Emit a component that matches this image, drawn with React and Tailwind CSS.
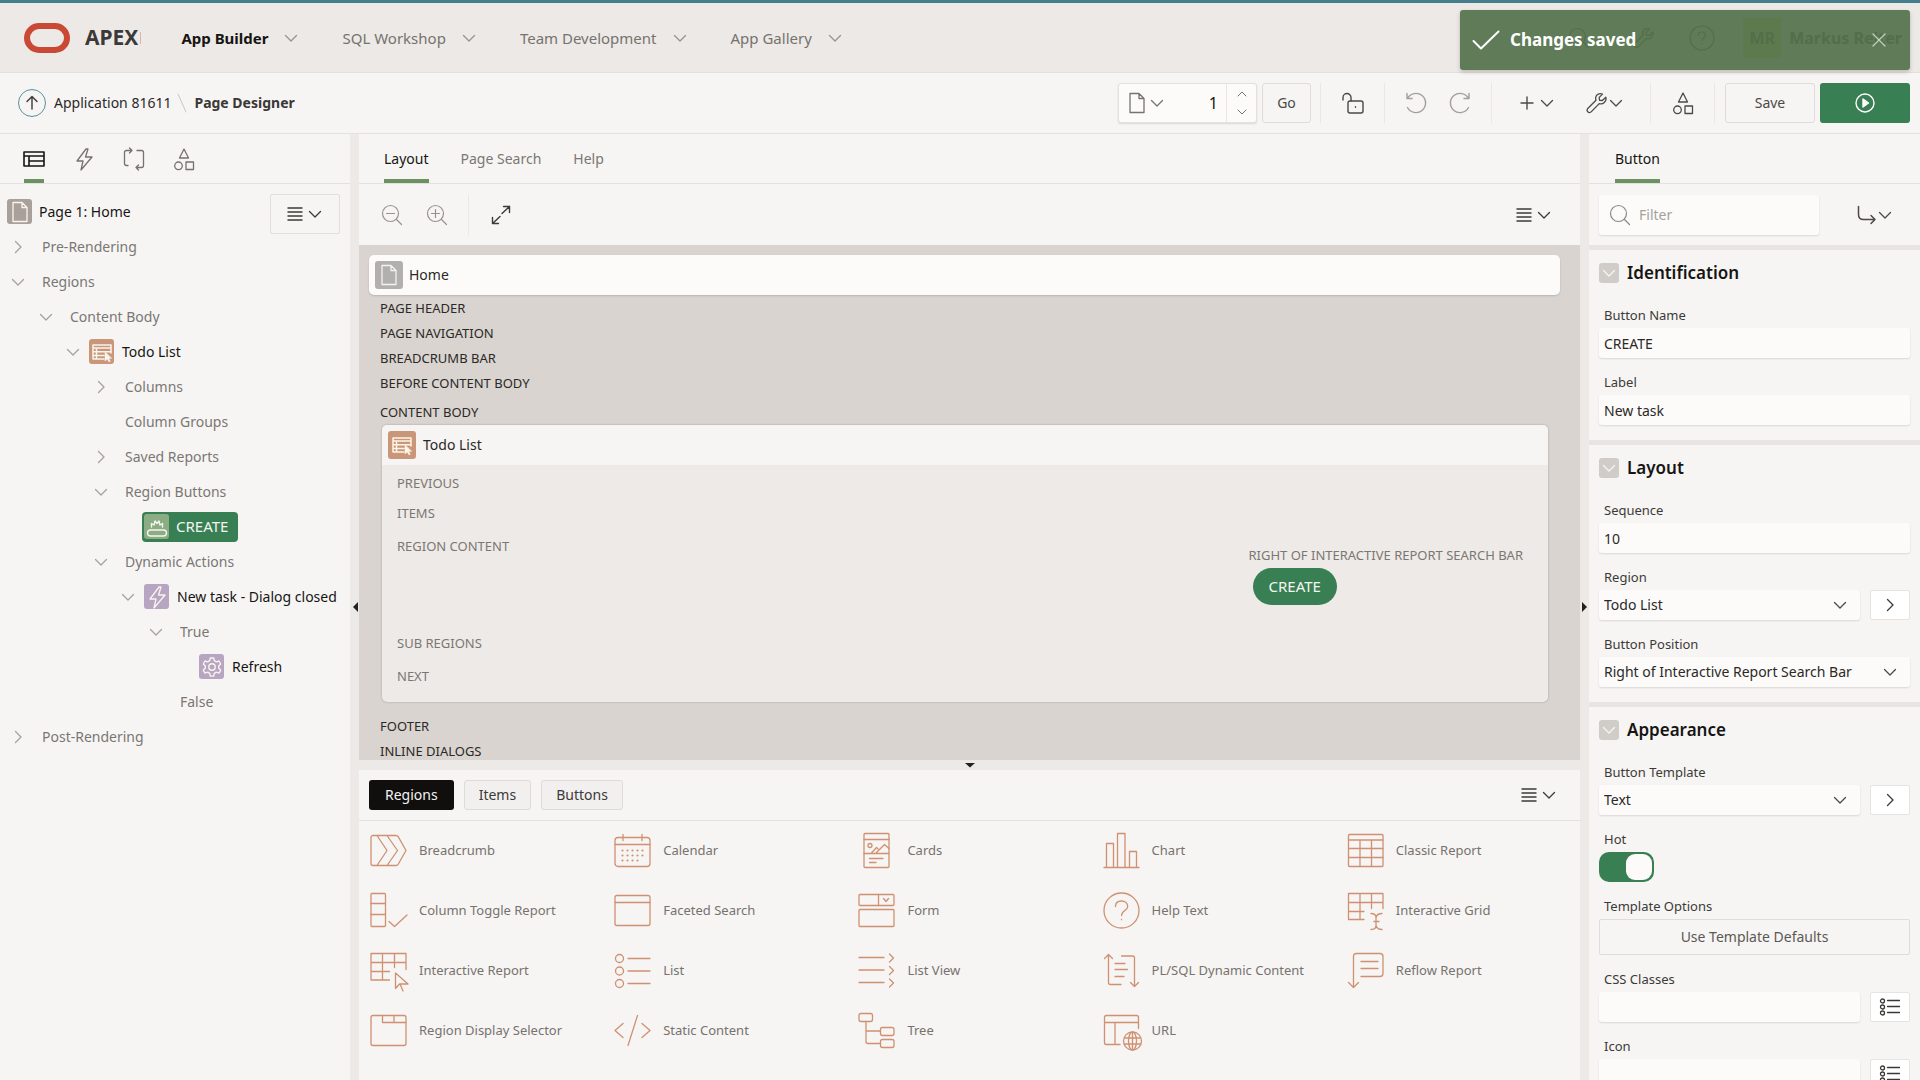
import React from "react";

/* ---------- icons ---------- */

function Svg({ size = 24, sw = 1, className = "", children, w, h, vb }) {
  return (
    <svg
      width={w || size}
      height={h || size}
      viewBox={vb || `0 0 ${w || size} ${h || size}`}
      fill="none"
      stroke="currentColor"
      strokeWidth={sw}
      strokeLinecap="round"
      strokeLinejoin="round"
      className={"shrink-0 " + className}
      aria-hidden="true"
    >
      {children}
    </svg>
  );
}

const ChevronDown = ({ className = "" }) => (
  <Svg size={16} sw={1.3} className={className}>
    <path d="M2.500 5.500 8 11l5.500-5.500" />
  </Svg>
);
const ChevronRight = ({ className = "" }) => (
  <Svg size={16} sw={1.3} className={className}>
    <path d="M5.500 2.500 11 8l-5.500 5.500" />
  </Svg>
);
const MenuLines = () => (
  <Svg size={16} sw={1.3}>
    <path d="M.5 2h15M.5 6h15M.5 10h15M.5 14h15" strokeLinecap="butt" />
  </Svg>
);
const FileIcon = ({ className = "" }) => (
  <Svg w={16} h={22} sw={1.3} className={className}>
    <path d="M1 1.500h9l5 5V20.500H1zM10 1.500v5h5" />
  </Svg>
);
const Bolt = ({ className = "" }) => (
  <Svg size={24} sw={1.3} className={className}>
    <path d="M14 2 5 14h6l-2 9 11-13h-6.500l2.500-8z" />
  </Svg>
);
const Shapes = () => (
  <Svg size={24} sw={1.3}>
    <path d="M12 2l4.500 9h-9zM14 15h7.500v7.500H14z" />
    <circle cx="6.500" cy="18.800" r="3.800" />
  </Svg>
);
const Wrench = () => (
  <Svg size={22} sw={1.300}>
    <path d="M19.800 5.200l-3.400 3.300-2.900-.200-.300-2.900 3.300-3.300C13.600.9 10.300 2.200 9.700 5.300c-.200 1 0 2 .300 3L2 16.300c-1.100 1.200-1.100 2.500-.2 3.500 1 1 2.500 1 3.600-.200l7.800-8c3.600 1.300 7.800-1.900 6.600-6.400z" />
  </Svg>
);
const SearchIcon = ({ sign = "", className = "" }) => (
  <Svg size={22} sw={1.200} className={className}>
    <circle cx="9.500" cy="9.500" r="8" />
    <path d="M15.500 15.500 20.500 20.500" />
    {sign !== "" && <path d="M5.500 9.500h8" />}
    {sign === "+" && <path d="M9.500 5.500v8" />}
  </Svg>
);
const ListIcon = () => (
  <Svg w={22} h={20} sw={1.300}>
    <circle cx="3.500" cy="4" r="2" />
    <circle cx="3.500" cy="10" r="2" />
    <circle cx="3.500" cy="16" r="2" />
    <path d="M8.500 3.500h12M8.500 9.500h12M8.500 15.500h12" />
  </Svg>
);

const GALLERY = [
  ["Breadcrumb", <path d="M6 6.500h23q1.500 0 2.200 1.200l7.800 13.800-7.800 13.800q-.7 1.200-2.200 1.200H6a2 2 0 0 1-2-2V8.500a2 2 0 0 1 2-2zM10 6.500l10 15-10 15M20 6.500l10.500 15-10.500 15" />],
  ["Calendar", <><rect x="4" y="8.500" width="35" height="29" rx="3" /><path d="M4 15.500h35M12 5.500v6M31 5.500v6" /><path strokeWidth="2.200" d="M11.500 21.500h0M16.500 21.500h0M21.500 21.500h0M26.500 21.500h0M31.500 21.500h0M11.500 26.500h0M16.500 26.500h0M21.500 26.500h0M26.500 26.500h0M31.500 26.500h0M11.500 31.500h0M16.500 31.500h0M21.500 31.500h0M26.500 31.500h0" /></>],
  ["Cards", <><rect x="9" y="4.500" width="25" height="34" rx="1" /><circle cx="15" cy="16.500" r="2" /><path d="M9 10.500h25M9 24.500h25M16 24.500l5.500-6 1.500 1.500M20.500 24.500l9-9 4.500 4M14.500 29.500H28M14.500 33.500H21" /></>],
  ["Chart", <path d="M4 38.500h35M6.500 38.500v-24h7v24M17.500 38.500v-34h7.500v34M29.500 38.500v-16h7v16" />],
  ["Classic Report", <><rect x="4.500" y="5.500" width="34.500" height="32" rx="1" /><path d="M4.500 11h34.500M4.500 19.500h34.500M4.500 28.500h34.500M16 11v26.500M27.500 11v26.500" /></>],
  ["Column Toggle Report", <><rect x="4" y="4.500" width="14.500" height="33" rx="1" /><path d="M4 14.500h14.500M4 25.500h14.500M22 32.500l5.500 5L40 26" /></>],
  ["Faceted Search", <><rect x="4" y="6.500" width="35" height="30" rx="2" /><path d="M4 13.500h35" /></>],
  ["Form", <><rect x="4" y="5.500" width="35" height="11" rx="1" /><rect x="4" y="20.500" width="35" height="17" rx="1" /><path d="M23.500 5.500v11M28.500 9.500l2.500 3 2.500-3" /></>],
  ["Help Text", <><circle cx="21.500" cy="21.500" r="17.500" /><path d="M15.500 17.500c0-3.500 2.500-5.500 6-5.500s6.200 2.200 6.200 5.500c0 4-6.200 4-6.200 9M21.500 30.300v.4" /></>],
  ["Interactive Grid", <path d="M39 19.500v-15H4.500v26H20M4.500 13.500H39M4.500 22.500H20M16 4.500v26M27.500 4.500v15M27 24.500q5 0 5 4v8q0 4-5 4M38 24.500q-5 0-6 4M38 40.500q-5 0-6-4M30 32.500h5" />],
  ["Interactive Report", <path d="M39 20.500v-16H4v26.500h18.500M4 13.500h35M4 22.500h18.500M15.500 4.500V31M27.500 4.500v14M28.500 24v15.500l4-4.500h8.500zM33 35l3 7" />],
  ["List", <><circle cx="8.500" cy="9.500" r="4" /><circle cx="8.500" cy="22" r="4" /><circle cx="8.500" cy="34.500" r="4" /><path d="M17 9.500h22M17 22h22M17 34.500h22" /></>],
  ["List View", <path d="M4 8.500h25M4 21h25M4 33.500h25M34.500 5l4 4-4 4M34.500 17.500l4 4-4 4M34.500 30l4 4-4 4" />],
  ["PL/SQL Dynamic Content", <path d="M4.500 9.500l4-4 4 4M8.500 5.500v28q0 2 2 2H21M21.500 7h11q2 0 2 2v28.500M30.500 33.500l4 4 4-4M15 14.500h10M15 20.500h12.500M15 27.500h9" />],
  ["Reflow Report", <path d="M4.500 33.500l5 5 5-5M9.500 38.500v-31q0-3 3-3H36q3 0 3 3v17q0 3-3 3H17M17 12.500h17M17 19.500h17" />],
  ["Region Display Selector", <><rect x="4" y="6.500" width="35" height="30" rx="2" /><path d="M15.500 6.500v7H39M27 6.500v7" /></>],
  ["Static Content", <path d="M12 14.500l-8 7 8 7M31 14.500l8 7-8 7M26.500 6.500l-9.500 30" />],
  ["Tree", <><rect x="4" y="4.500" width="13.500" height="8" rx="2" /><rect x="25.500" y="18.500" width="13.500" height="8" rx="2" /><rect x="25.500" y="30.500" width="13.500" height="8" rx="2" /><path d="M11 12.500v20q0 2 2 2h12.500M11 22h14.500" /></>],
  ["URL", <><path d="M38.500 19.500v-11q0-2-2-2h-30q-2 0-2 2v25q0 2 2 2H20M4.500 13.500h34M15 13.500v22" /><circle cx="32.500" cy="32" r="9" /><ellipse cx="32.500" cy="32" rx="4" ry="9" /><path d="M32.500 23v18M24.500 29h16M24.500 35h16" /></>],
];

/* ---------- tiles ---------- */

const RegionGlyph = () => (
  <Svg size={22} sw={1.500}>
    <path d="M20 12V4H2v14h11M2 7h18M2 10.800h18M2 14.500h11M5.500 7v11" />
    <path d="M14 11v9l2.200-2 1.800 3 1.300-.8-1.600-2.900h2.800z" fill="currentColor" strokeWidth=".5" />
  </Svg>
);
const ButtonGlyph = () => (
  <Svg size={22} sw={1.400}>
    <rect x="1.500" y="14" width="19" height="6" rx="3" />
    <path d="M5.500 11V7.500L8 9l1-4 2 2.500L13 5l1 4 2.500-1.500V11" />
  </Svg>
);
const GearGlyph = () => (
  <Svg size={22} sw={1.400}>
    <circle cx="11" cy="11" r="3.200" />
    <path d="M9.300 2h3.400l.6 2.700 2 1.200 2.700-.9 1.700 3-2 1.900v2.300l2 1.900-1.700 3-2.700-.9-2 1.200-.6 2.700H9.300l-.6-2.700-2-1.200-2.700.9-1.700-3 2-1.900V9.900l-2-1.900 1.700-3 2.700.9 2-1.200z" />
  </Svg>
);

function Tile({ kind }) {
  const bg = {
    page: "bg-[#a8a099]",
    region: "bg-[#ca9679]",
    button: "bg-[#8aad84]",
    action: "bg-[#b8a5c1]",
    refresh: "bg-[#b8a5c1]",
  }[kind];
  return (
    <span className={"flex size-[25px] shrink-0 items-center justify-center rounded-[3px] text-[#f8f5ee] " + bg}>
      {kind === "page" && <FileIcon />}
      {kind === "region" && <RegionGlyph />}
      {kind === "button" && <ButtonGlyph />}
      {kind === "action" && <Bolt />}
      {kind === "refresh" && <GearGlyph />}
    </span>
  );
}

/* ---------- header ---------- */

function Header() {
  const nav = ["App Builder", "SQL Workshop", "Team Development", "App Gallery"];
  return (
    <header className="relative flex h-[73px] shrink-0 items-center border-t-[3px] border-b border-t-[#447e8c] border-b-[#e3e0dc] bg-[#ede9e6] pt-px pr-[18px] pl-6">
      <Svg w={46} h={30}>
        <rect x="3" y="3" width="40" height="24" rx="12" strokeWidth="6" className="text-[#c94935]" />
      </Svg>
      <span className="ml-[15px] text-[21px] font-bold text-[#3c3a38]">APEX</span>
      <span className="ml-[2px] h-3 w-px bg-[#e0b5a8]" />
      <nav className="ml-[40px] flex gap-[43px]">
        {nav.map((n, i) => (
          <button key={n} className="flex items-center gap-[15px] text-[15px]">
            <span className={i === 0 ? "font-bold text-[#161513]" : "text-[#76726e]"}>{n}</span>
            <ChevronDown className="text-[#98938e]" />
          </button>
        ))}
      </nav>
      <div className="ml-auto flex items-center text-[#3c3a38]">
        <button aria-label="Search" className="mr-[43px]"><SearchIcon /></button>
        <button aria-label="Administration" className="mr-[34px]"><Wrench /></button>
        <button aria-label="Help" className="mr-7">
          <Svg size={26} sw={1.200}>
            <circle cx="13" cy="13" r="12" />
            <path d="M9.500 10.500c0-2.500 1.500-3.500 3.500-3.500s3.500 1.200 3.500 3.300c0 2.500-3.500 2.700-3.500 5.200M13 18.500v.3" />
          </Svg>
        </button>
        <button className="flex items-center gap-2 text-base font-bold">
          <span className="flex h-10 w-[38px] items-center justify-center bg-[#bfe06a]">MR</span>
          Markus Reiter
        </button>
      </div>
      <div
        role="status"
        className="absolute top-[7px] right-[10px] z-10 flex h-[60px] w-[450px] items-center rounded-[3px] bg-[#54724b]/93 pr-6 pl-3 text-white shadow-[0_2px_4px_rgba(0,0,0,0.2)]"
      >
        <Svg w={28} h={20} sw={2}>
          <path d="M1.500 11 9 18.500 26.500 1.500" />
        </Svg>
        <span className="ml-[10px] text-[17px] font-bold">Changes saved</span>
        <button aria-label="Close" className="ml-auto text-[#c5d0bf]">
          <Svg size={14} sw={1.300}><path d="M1 1l12 12M13 1 1 13" /></Svg>
        </button>
      </div>
    </header>
  );
}

const Divider = () => <span className="h-10 w-px shrink-0 bg-[#eae7e4]" />;

function Toolbar() {
  return (
    <div className="flex h-[61px] shrink-0 items-center border-b border-[#e3e1de] pr-[10px] pl-[18px] text-[#4c4946]">
      <a href="#app" aria-label="Up" className="flex size-7 items-center justify-center rounded-full border border-[#56909c] text-[#3c3a38]">
        <Svg size={16} sw={1.400}><path d="M8 14V2M3 6.500 8 1.500l5 5" /></Svg>
      </a>
      <a href="#app" className="ml-2 text-sm text-[#2b2927]">Application 81611</a>
      <Svg w={10} h={20} className="mr-[7px] ml-[6px] text-[#c9c5c1]"><path d="M1 1l8 18" /></Svg>
      <span className="text-sm font-bold text-[#3a3836]">Page Designer</span>

      <div className="ml-auto flex items-center">
        <div className="flex h-10 w-[139px] items-center rounded-[3px] border border-[#e3e1de] bg-[#fcfbf9] shadow-[0_1px_2px_rgba(0,0,0,0.12)]">
          <button aria-label="Page finder" className="ml-[10px] flex items-center gap-1 text-[#76726e]">
            <FileIcon /><ChevronDown />
          </button>
          <input aria-label="Page number" defaultValue="1" className="w-0 min-w-0 flex-1 bg-transparent pr-2 text-right text-base text-[#161513] outline-none" />
          <div className="flex h-full w-[30px] flex-col items-center justify-center gap-[12px] border-l border-[#e8e5e2] text-[#76726e]">
            <button aria-label="Next page"><Svg w={10} h={6}><path d="M1 5l4-4 4 4" /></Svg></button>
            <button aria-label="Previous page"><Svg w={10} h={6}><path d="M1 1l4 4 4-4" /></Svg></button>
          </div>
        </div>
        <button className="ml-[5px] h-10 w-[49px] rounded-[3px] border border-[#dfdcd9] text-sm">Go</button>
        <span className="ml-[9px]" /><Divider />
        <button aria-label="Page unlocked" className="flex w-[63px] justify-center">
          <Svg size={22} sw={1.400}>
            <rect x="6" y="9" width="15" height="12" rx="2" />
            <path d="M9 9V5.500a4 4 0 0 0-8 0V8M13.500 14.800v.4" />
          </Svg>
        </button>
        <Divider />
        <button aria-label="Undo" className="ml-[20px] text-[#a29e9a]">
          <Svg size={22} sw={1.400}><path d="M2 1.500v5h5M2.500 6.500A9.600 9.600 0 1 1 2.500 15.500" /></Svg>
        </button>
        <button aria-label="Redo" className="mr-[20px] ml-[22px] text-[#a29e9a]">
          <Svg size={22} sw={1.400}><path d="M20 1.500v5h-5M19.500 6.500A9.600 9.600 0 1 0 19.500 15.500" /></Svg>
        </button>
        <Divider />
        <button aria-label="Create" className="ml-[28px] flex items-center gap-[5px]">
          <Svg size={14} sw={1.400}><path d="M7 1v12M1 7h12" /></Svg><ChevronDown />
        </button>
        <button aria-label="Utilities" className="mr-[26px] ml-[31px] flex items-center">
          <Wrench /><ChevronDown />
        </button>
        <Divider />
        <button aria-label="Shared Components" className="flex w-[63px] justify-center"><Shapes /></button>
        <Divider />
        <button className="ml-[10px] h-10 w-[90px] rounded-[3px] border border-[#dfdcd9] text-sm">Save</button>
        <button aria-label="Save and Run Page" className="ml-[5px] flex h-10 w-[90px] items-center justify-center rounded-[3px] bg-[#397f54] text-white">
          <Svg size={20} sw={1.400}>
            <circle cx="10" cy="10" r="9" />
            <path d="M8 6l5.500 4L8 14z" fill="currentColor" />
          </Svg>
        </button>
      </div>
    </div>
  );
}

/* ---------- left tree ---------- */

const PAD = ["pl-[10px]", "pl-[38px]", "pl-[65px]", "pl-[93px]", "pl-[120px]", "pl-[148px]", "pl-[175px]"];

const TREE = [
  [0, "right", null, "Pre-Rendering"],
  [0, "down", null, "Regions"],
  [1, "down", null, "Content Body"],
  [2, "down", "region", "Todo List"],
  [3, "right", null, "Columns"],
  [3, null, null, "Column Groups"],
  [3, "right", null, "Saved Reports"],
  [3, "down", null, "Region Buttons"],
  [4, null, "button", "CREATE"],
  [3, "down", null, "Dynamic Actions"],
  [4, "down", "action", "New task - Dialog closed"],
  [5, "down", null, "True"],
  [6, null, "refresh", "Refresh"],
  [5, null, null, "False"],
  [0, "right", null, "Post-Rendering"],
];

function TreeRow({ row }) {
  const [level, arrow, tile, label] = row;
  const selected = tile === "button";
  return (
    <li className={"flex h-[35px] items-center whitespace-nowrap text-sm " + PAD[level]}>
      <span className="flex w-4 shrink-0 text-[#a5a19d]">
        {arrow === "down" && <ChevronDown />}
        {arrow === "right" && <ChevronRight />}
      </span>
      {selected ? (
        <span className="ml-[6px] flex h-[30px] items-center gap-[7px] rounded-[4px] bg-[#397f54] pr-[10px] pl-[2px] text-[15px] text-[#f3f6f2]">
          <Tile kind={tile} />{label}
        </span>
      ) : tile ? (
        <span className="ml-2 flex items-center gap-2 text-[#161513]"><Tile kind={tile} />{label}</span>
      ) : (
        <span className="ml-4 text-[#7b7773]">{label}</span>
      )}
    </li>
  );
}

function LeftPanel() {
  return (
    <aside className="flex min-w-0 flex-col overflow-hidden">
      <div className="flex h-[50px] shrink-0 border-b border-[#e3e1de] pl-[22px] text-[#76726e]">
        <button aria-label="Rendering" className="relative mr-[26px] flex h-full w-6 items-center justify-center text-[#161513] after:absolute after:inset-x-[2px] after:bottom-0 after:h-1 after:bg-[#6b9362]">
          <Svg w={22} h={18} sw={1.600}><path d="M1 2h20v14H1zM1 6h20M6 6v10M6 11h15" /></Svg>
        </button>
        <button aria-label="Dynamic Actions" className="mr-[26px]"><Bolt /></button>
        <button aria-label="Processing" className="mr-[26px]">
          <Svg size={24} sw={1.300}>
            <path d="M10 3.500H4.500q-2 0-2 2v11q0 2 2 2H6M7.500 1l2.500 2.500L7.500 6M14 20.500h5.500q2 0 2-2v-13q0-2-2-2H15M16.500 18 14 20.500l2.500 2.500" />
          </Svg>
        </button>
        <button aria-label="Page Shared Components"><Shapes /></button>
      </div>
      <div className="relative pt-[10px]">
        <div className="flex h-[35px] items-center gap-[7px] pl-[7px] text-sm text-[#161513]">
          <Tile kind="page" />Page 1: Home
        </div>
        <button aria-label="Menu" className="absolute top-[10px] right-[10px] flex h-10 w-[70px] items-center justify-center gap-1 rounded-[2px] border border-[#e1dedb] text-[#3c3a38]">
          <MenuLines /><ChevronDown />
        </button>
        <ul>
          {TREE.map((r) => <TreeRow key={r[3]} row={r} />)}
        </ul>
      </div>
    </aside>
  );
}

/* ---------- centre ---------- */

function Tab({ active, children }) {
  return (
    <button
      className={
        "relative h-full pt-px text-sm " +
        (active
          ? "text-[#161513] after:absolute after:inset-x-0 after:bottom-0 after:h-1 after:bg-[#6b9362]"
          : "text-[#7b7773]")
      }
    >
      {children}
    </button>
  );
}

function Canvas() {
  return (
    <div className="min-h-0 flex-1 overflow-hidden bg-[#d9d4cf] pt-[10px] pr-[20px] pl-[10px] text-[13px] text-[#2b2927]">
      <div className="flex h-10 items-center gap-[6px] rounded-[5px] bg-[#fcfbf9] pl-[6px] text-sm shadow-[0_1px_2px_rgba(0,0,0,0.15)]">
        <span className="flex size-7 items-center justify-center rounded-[3px] bg-[#b1b0ae] text-[#f3f2f0]"><FileIcon /></span>
        Home
      </div>
      <div className="pt-px pl-[11px]">
        {["PAGE HEADER", "PAGE NAVIGATION", "BREADCRUMB BAR", "BEFORE CONTENT BODY"].map((t) => (
          <p key={t} className="h-[25px] leading-[25px]">{t}</p>
        ))}
        <p className="h-[29px] pt-1 leading-[25px]">CONTENT BODY</p>
      </div>
      <section className="mr-3 ml-[13px] overflow-hidden rounded-[5px] bg-[#eeeae7] shadow-[0_0_2px_rgba(0,0,0,0.3)]">
        <div className="flex h-10 items-center gap-[7px] bg-[#f6f5f3] pl-[6px] text-sm">
          <span className="flex size-7 items-center justify-center rounded-[3px] bg-[#ca9679] text-[#fdf6e6]"><RegionGlyph /></span>
          Todo List
        </div>
        <div className="px-[15px] pt-[3px] pb-[10px] text-[#7b7773]">
          <p className="h-[30px] leading-[30px]">PREVIOUS</p>
          <p className="h-[30px] leading-[30px]">ITEMS</p>
          <div className="flex h-[98px] justify-between pr-[10px]">
            <p className="pt-[3px] leading-[30px]">REGION CONTENT</p>
            <div className="pt-[15px]">
              <p className="leading-[25px]">RIGHT OF INTERACTIVE REPORT SEARCH BAR</p>
              <button className="ml-1 flex h-[37px] items-center rounded-full bg-[#397f54] px-4 text-[15px] text-[#f3f6f2]">CREATE</button>
            </div>
          </div>
          <p className="h-[34px] leading-[34px]">SUB REGIONS</p>
          <p className="h-[32px] leading-[32px]">NEXT</p>
        </div>
      </section>
      <div className="pt-[10px] pl-[11px]">
        <p className="h-[30px] leading-[28px]">FOOTER</p>
        <p className="leading-[18px]">INLINE DIALOGS</p>
      </div>
    </div>
  );
}

function Center() {
  return (
    <main className="flex min-h-0 min-w-0 flex-col">
      <div className="flex h-[50px] shrink-0 gap-8 border-b border-[#e3e1de] pl-[25px]">
        <Tab active>Layout</Tab>
        <Tab>Page Search</Tab>
        <Tab>Help</Tab>
      </div>
      <div className="flex h-[61px] shrink-0 items-center pr-[28px] pl-[22px] text-[#3c3a38]">
        <button aria-label="Zoom out" className="text-[#98938e]"><SearchIcon sign="-" /></button>
        <button aria-label="Zoom in" className="mr-[20px] ml-[23px] text-[#98938e]"><SearchIcon sign="+" /></button>
        <Divider />
        <button aria-label="Expand" className="ml-[22px]">
          <Svg size={20} sw={1.400}><path d="M12.500 1.500h6V7.500M18.500 1.500l-7.500 7M1.500 12.500v6H7.500M1.500 18.500l7.500-7" /></Svg>
        </button>
        <button aria-label="Layout menu" className="ml-auto flex items-center gap-1"><MenuLines /><ChevronDown /></button>
      </div>
      <Canvas />
      <div className="flex h-[10px] shrink-0 items-center justify-center bg-[#ede9e6]">
        <Svg w={10} h={6}><path d="M0 1h10L5 5.500z" fill="#23211f" stroke="none" /></Svg>
      </div>
      <section className="flex h-[310px] shrink-0 flex-col">
        <div className="flex h-[51px] shrink-0 items-center gap-[10px] border-b border-[#e3e1de] pr-[23px] pl-[10px] text-sm text-[#3c3a38]">
          <button className="h-[30px] rounded-[3px] bg-[#100f0e] px-4 text-[#f3f2f0]">Regions</button>
          <button className="h-[30px] rounded-[3px] border border-[#dddad7] bg-[#f1f0ee] px-[14px]">Items</button>
          <button className="h-[30px] rounded-[3px] border border-[#dddad7] bg-[#f1f0ee] px-[14px]">Buttons</button>
          <button aria-label="Gallery menu" className="ml-auto flex items-center gap-1"><MenuLines /><ChevronDown /></button>
        </div>
        <div className="grid auto-rows-[60px] grid-cols-5">
          {GALLERY.map(([label, art]) => (
            <button key={label} className="flex items-center gap-2 pl-2 text-left text-[13px] whitespace-nowrap text-[#76726e]">
              <Svg size={44} sw={1.300} className="text-[#cf9172]">{art}</Svg>
              {label}
            </button>
          ))}
        </div>
      </section>
    </main>
  );
}

/* ---------- right panel ---------- */

const field = "h-[30px] w-full min-w-0 rounded-[3px] bg-[#fcfbf9] pl-[5px] text-sm text-[#2b2927] shadow-[0_1px_2px_rgba(0,0,0,0.12)] outline-none";
const sideBtn = "flex h-[30px] w-10 shrink-0 items-center justify-center rounded-[2px] border border-[#e6e3e0] bg-white text-[#3c3a38]";

function Group({ title, children, last }) {
  return (
    <section className={"border-t-[5px] border-[#e7e4e1] px-[10px] " + (last ? "" : "pb-[15px]")}>
      <h2 className="flex h-[41px] items-center gap-2 pt-[5px] text-[17px] font-semibold text-[#161513]">
        <button aria-label={"Collapse " + title} className="flex size-5 items-center justify-center rounded-[3px] bg-[#d0cdc8] text-[#f6f5f3]">
          <ChevronDown />
        </button>
        {title}
      </h2>
      {children}
    </section>
  );
}

function Label({ id, children }) {
  return (
    <label htmlFor={id} className="block h-[37px] pt-[14px] pl-[5px] text-[13px] leading-5 text-[#3c3a38]">
      {children}
    </label>
  );
}

function TextField({ id, label, value = "", browse }) {
  return (
    <div>
      <Label id={id}>{label}</Label>
      <div className="flex gap-[10px]">
        <input id={id} defaultValue={value} className={field} />
        {browse && <button aria-label={"Pick " + label} className={sideBtn}><ListIcon /></button>}
      </div>
    </div>
  );
}

function SelectField({ id, label, value, go }) {
  return (
    <div>
      <Label id={id}>{label}</Label>
      <div className="flex gap-[10px]">
        <div className="relative min-w-0 flex-1">
          <select id={id} className={field + " appearance-none"}><option>{value}</option></select>
          <ChevronDown className="pointer-events-none absolute top-[7px] right-3 text-[#4c4946]" />
        </div>
        {go && <button aria-label={"Go to " + label} className={sideBtn}><ChevronRight /></button>}
      </div>
    </div>
  );
}

function RightPanel() {
  return (
    <aside className="min-w-0 overflow-hidden">
      <div className="h-[50px] border-b border-[#e3e1de] pl-[26px]"><Tab active>Button</Tab></div>
      <div className="flex h-[61px] items-center px-[10px]">
        <div className="flex h-10 w-[220px] items-center gap-2 rounded-[3px] bg-[#fcfbf9] pl-[10px] text-[#8d8985] shadow-[0_1px_2px_rgba(0,0,0,0.12)]">
          <SearchIcon />
          <input aria-label="Filter" placeholder="Filter" className="min-w-0 flex-1 bg-transparent text-sm outline-none placeholder:text-[#a5a19d]" />
        </div>
        <button aria-label="Go to group" className="mr-[17px] ml-auto flex items-center text-[#4c4946]">
          <Svg size={20} sw={1.500}><path d="M1.500 1.500v8q0 5 5 5H18M14 10.500l4 4-4 4" /></Svg><ChevronDown />
        </button>
      </div>
      <Group title="Identification">
        <TextField id="name" label="Button Name" value="CREATE" />
        <TextField id="label" label="Label" value="New task" />
      </Group>
      <Group title="Layout">
        <TextField id="seq" label="Sequence" value="10" />
        <SelectField id="region" label="Region" value="Todo List" go />
        <SelectField id="position" label="Button Position" value="Right of Interactive Report Search Bar" />
      </Group>
      <Group title="Appearance" last>
        <SelectField id="template" label="Button Template" value="Text" go />
        <Label id="hot">Hot</Label>
        <span className="relative flex h-[30px] w-[55px]">
          <input id="hot" type="checkbox" role="switch" defaultChecked className="peer h-[30px] w-[55px] appearance-none rounded-[10px] bg-[#a8a39e] checked:bg-[#397f54]" />
          <span className="pointer-events-none absolute top-[2px] left-[2px] size-[26px] rounded-[9px] bg-[#fcfbf9] peer-checked:left-[27px]" />
        </span>
        <Label id="options">Template Options</Label>
        <button id="options" className="h-9 w-full rounded-[2px] border border-[#dfdcd9] text-sm text-[#5c5855]">Use Template Defaults</button>
        <TextField id="css" label="CSS Classes" browse />
        <TextField id="icon" label="Icon" browse />
      </Group>
    </aside>
  );
}

/* ---------- page ---------- */

function Splitter({ dir }) {
  return (
    <div className="flex items-center justify-center bg-[#ede9e6]">
      <Svg w={6} h={10}>
        <path d={dir === "left" ? "M6 0v10L1 5z" : "M0 0v10l5-5z"} fill="#23211f" stroke="none" />
      </Svg>
    </div>
  );
}

export default function App() {
  return (
    <div className="flex h-screen flex-col overflow-hidden bg-[#f6f5f3] font-['Noto_Sans','Open_Sans',sans-serif]">
      <Header />
      <Toolbar />
      <div className="grid min-h-0 flex-1 grid-cols-[350px_9px_minmax(0,1fr)_9px_331px] grid-rows-[minmax(0,1fr)]">
        <LeftPanel />
        <Splitter dir="left" />
        <Center />
        <Splitter dir="right" />
        <RightPanel />
      </div>
    </div>
  );
}
